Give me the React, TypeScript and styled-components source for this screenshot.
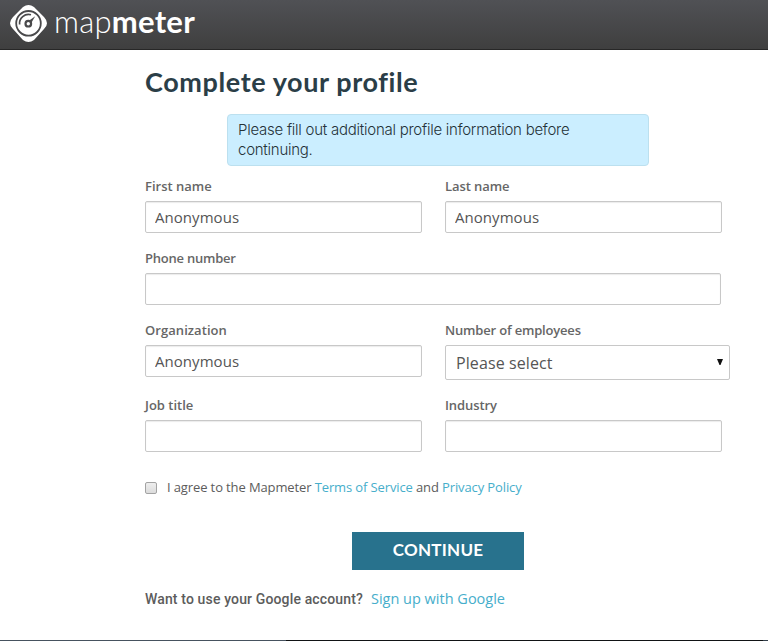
import React from "react";
import styled, { createGlobalStyle } from "styled-components";

const GlobalStyle = createGlobalStyle`
  * { box-sizing: border-box; }
  html, body { margin: 0; background: #fff; }
  body { font-family: "Open Sans", sans-serif; color: #5c5c5c; overflow: hidden; }
`;

const Page = styled.div`
  height: 641px;
  display: flex;
  flex-direction: column;
`;

const Header = styled.header`
  height: 50px;
  flex: none;
  display: flex;
  align-items: flex-start;
  padding: 4px 0 0 10px;
  background: linear-gradient(#505155, #3f3f3f);
  border-bottom: 1px solid #272727;
`;

const Wordmark = styled.span`
  margin: 0 0 0 7px;
  font: 300 31px/34px Lato, sans-serif;
  letter-spacing: 0.25px;
  color: #fff;
  white-space: nowrap;
`;

const Strong = styled.b`
  font-weight: 700;
`;

const Main = styled.main`
  flex: 1;
  width: 585px;
  margin-left: 145px;
`;

const Title = styled.h1`
  margin: 14px 0 0;
  font: 700 27px/36px Lato, sans-serif;
  letter-spacing: 0.6px;
  color: #2b3e47;
  white-space: nowrap;
`;

const Notice = styled.div`
  width: 422px;
  height: 52px;
  margin: 14px 0 0 82px;
  padding: 5px 10px;
  border: 1px solid #bce0ef;
  border-radius: 4px;
  background: #cbeeff;
  color: #253238;
  font: 300 15px/20px Inter, sans-serif;
  letter-spacing: -0.25px;
`;

const Form = styled.form`
  padding-top: 10px;
`;

const Row = styled.div<{ $height?: number }>`
  display: flex;
  gap: 23px;
  height: ${(p) => p.$height ?? 72}px;
`;

const Field = styled.label`
  display: block;
`;

const Caption = styled.span<{ $spacing?: number }>`
  display: block;
  height: 25px;
  font-size: 13px;
  line-height: 20px;
  font-weight: 600;
  letter-spacing: ${(p) => p.$spacing ?? 0}px;
  color: #666;
`;

const Input = styled.input<{ $width?: number }>`
  display: block;
  width: ${(p) => p.$width ?? 277}px;
  height: 32px;
  padding: 0 9px;
  border: 1px solid #c8c8c8;
  border-radius: 2px;
  background: #fff;
  box-shadow: inset 0 1px 1px rgba(0, 0, 0, 0.08);
  font: 400 15px/20px "Open Sans", sans-serif;
  letter-spacing: 0.05px;
  color: #555;
  outline: none;
`;

const Select = styled.div`
  display: flex;
  align-items: center;
  justify-content: space-between;
  width: 285px;
  height: 35px;
  padding: 1px 6px 0 10px;
  border: 1px solid #c8c8c8;
  border-radius: 2px;
  font-size: 16px;
  letter-spacing: 0.1px;
  color: #555;
`;

const Arrow = styled.svg`
  margin-top: -3px;
`;

const Agreement = styled.label`
  display: flex;
  align-items: center;
  gap: 10px;
  height: 20px;
  margin-top: 10px;
  font-size: 13px;
  letter-spacing: -0.12px;
  white-space: nowrap;
`;

const Checkbox = styled.input`
  appearance: none;
  width: 12px;
  height: 12px;
  margin: 1px 0 0;
  border: 1px solid #a3a3a3;
  border-radius: 2px;
  background: linear-gradient(#eee, #dcdcdc);
`;

const Link = styled.a`
  color: #46aecb;
  text-decoration: none;
`;

const Submit = styled.button`
  display: block;
  width: 172px;
  height: 38px;
  margin: 35px 0 0 207px;
  padding: 0 0 2px;
  border: 0;
  background: #28728d;
  color: #fff;
  font: 700 17px/36px Lato, sans-serif;
  letter-spacing: 0.25px;
`;

const Alternative = styled.p`
  display: flex;
  align-items: baseline;
  gap: 8px;
  margin: 19px 0 0;
  font-size: 14.5px;
  line-height: 20px;
  white-space: nowrap;
`;

const Question = styled.span`
  font: 500 14px/20px Roboto, sans-serif;
  letter-spacing: 0.14px;
  color: #5c5c5c;
`;

const BottomEdge = styled.div`
  flex: none;
  display: grid;
  grid-template-columns: 286px 1fr 5px;
  height: 1px;
`;

const Edge = styled.span<{ $color: string }>`
  background: ${(p) => p.$color};
`;

function Logo() {
  return (
    <svg width="37" height="39" viewBox="0 0 37 39" fill="none">
      <path d="M13 3 Q18.5-1 24 3 L34 13 Q40 19.5 34 25 L24 36 Q18.5 40 13 36 L3 25 Q-3 19.5 3 13 Z" fill="#fff" />
      <circle cx="18.5" cy="19.3" r="12.3" stroke="#4a4a4c" strokeWidth="1.8" />
      <path d="M9.6 20.5 A9 9 0 0 1 21 10.8" stroke="#4a4a4c" strokeWidth="1.7" />
      <circle cx="18.3" cy="19.7" r="2.8" stroke="#4a4a4c" strokeWidth="2.2" />
      <path d="M19.2 16.5 L25.2 12.2 L21.4 18.8 Z" fill="#4a4a4c" />
    </svg>
  );
}

interface TextFieldProps {
  label: string;
  value?: string;
  width?: number;
  spacing?: number;
}

function TextField({ label, value = "", width, spacing }: TextFieldProps) {
  return (
    <Field>
      <Caption $spacing={spacing}>{label}</Caption>
      <Input defaultValue={value} $width={width} />
    </Field>
  );
}

export default function App() {
  return (
    <Page>
      <GlobalStyle />
      <Header>
        <Logo />
        <Wordmark>map<Strong>meter</Strong></Wordmark>
      </Header>
      <Main>
        <Title>Complete your profile</Title>
        <Notice>Please fill out additional profile information before continuing.</Notice>
        <Form>
          <Row>
            <TextField label="First name" value="Anonymous" />
            <TextField label="Last name" value="Anonymous" spacing={-0.07} />
          </Row>
          <Row>
            <TextField label="Phone number" width={576} spacing={-0.23} />
          </Row>
          <Row $height={75}>
            <TextField label="Organization" value="Anonymous" spacing={0.06} />
            <Field as="div">
              <Caption $spacing={-0.18}>Number of employees</Caption>
              <Select>
                Please select
                <Arrow width="6" height="6" viewBox="0 0 6 6"><path d="M0 0H6L3.5 6H2.5Z" fill="#111" /></Arrow>
              </Select>
            </Field>
          </Row>
          <Row>
            <TextField label="Job title" />
            <TextField label="Industry" spacing={-0.1} />
          </Row>
          <Agreement>
            <Checkbox type="checkbox" />
            <span>I agree to the Mapmeter <Link>Terms of Service</Link> and <Link>Privacy Policy</Link></span>
          </Agreement>
          <Submit type="button">CONTINUE</Submit>
        </Form>
        <Alternative>
          <Question>Want to use your Google account?</Question>
          <Link>Sign up with Google</Link>
        </Alternative>
      </Main>
      <BottomEdge>
        <Edge $color="#46525f" />
        <Edge $color="#111315" />
        <Edge $color="#34404c" />
      </BottomEdge>
    </Page>
  );
}
